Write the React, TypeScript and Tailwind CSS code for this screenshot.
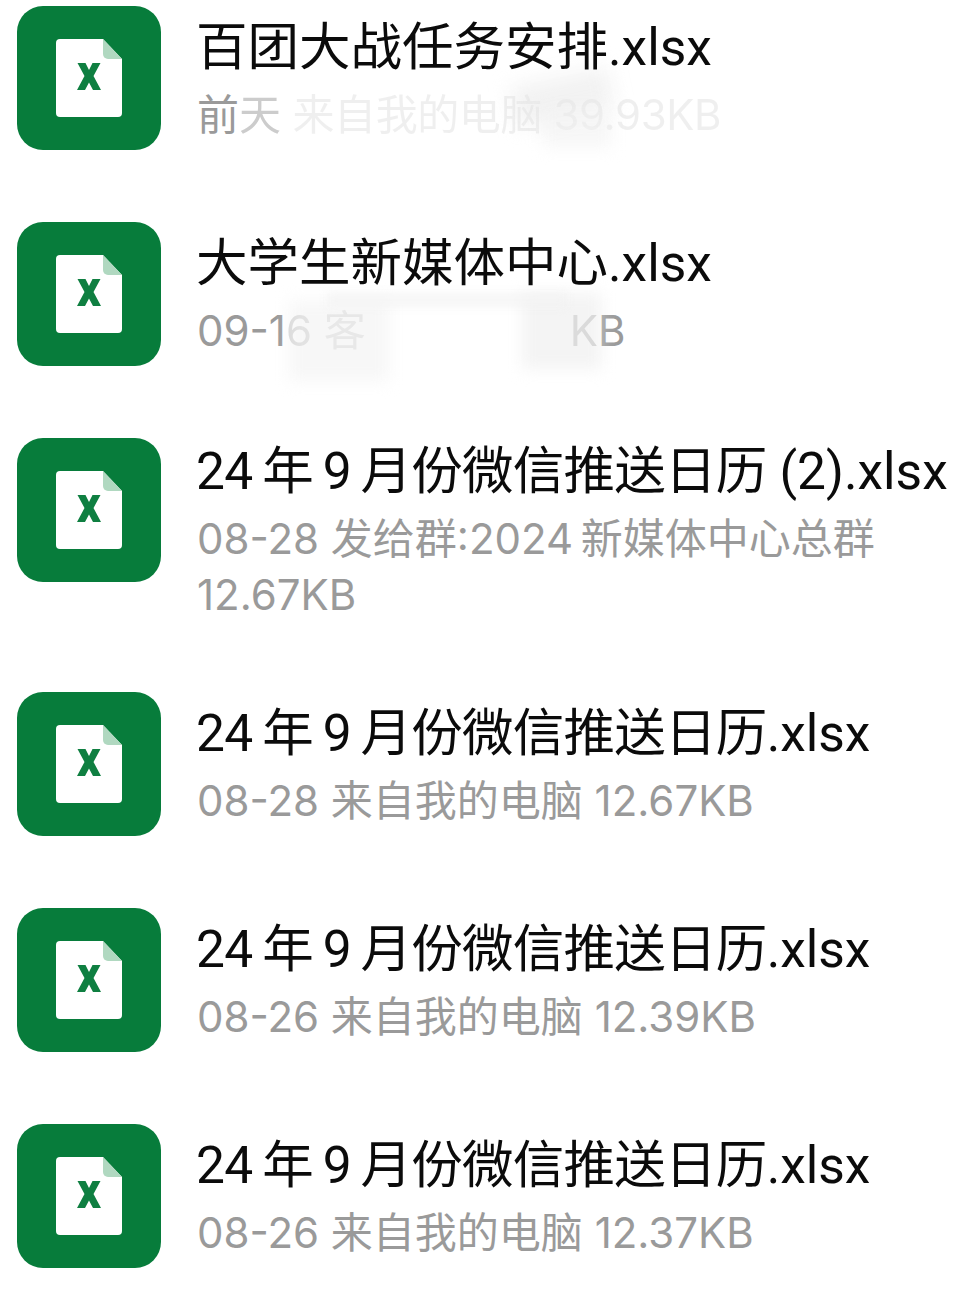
const NAME_24 = '24\u2009年\u20099\u2009月份微信推送日历';

const files = [
  { name: '百团大战任务安排', ext: '.xlsx', meta: [], kind: 'first' },
  { name: '大学生新媒体中心', ext: '.xlsx', meta: [], kind: 'second' },
  { name: NAME_24, ext: ' (2).xlsx', meta: ['08-28 发给群:2024\u2009新媒体中心总群', '12.67KB'], kind: 'tall' },
  { name: NAME_24, ext: '.xlsx', meta: ['08-28 来自我的电脑 12.67KB'], kind: 'plain' },
  { name: NAME_24, ext: '.xlsx', meta: ['08-26 来自我的电脑 12.39KB'], kind: 'plain' },
  { name: NAME_24, ext: '.xlsx', meta: ['08-26 来自我的电脑 12.37KB'], kind: 'plain' },
];

function ExcelIcon() {
  return (
    <div className="flex h-[144px] w-[144px] shrink-0 items-center justify-center rounded-[26px] bg-[#077c3b]">
      <svg width="66" height="78" viewBox="0 0 66 78">
        <path d="M4 0H47L66 20V74a4 4 0 0 1-4 4H4a4 4 0 0 1-4-4V4a4 4 0 0 1 4-4Z" fill="#ffffff" />
        <path d="M47 0L66 20H52a5 5 0 0 1-5-5Z" fill="#b0d8c0" />
        <path d="M21.5 24H29.5L33 31L36.5 24H44.5L37.5 37L45 51H37L33 43.5L29 51H21L28.5 37Z" fill="#0f7f41" />
      </svg>
    </div>
  );
}

// 第一行的涂抹:文字几乎被擦掉
function SmudgedFirst() {
  return (
    <div className="relative text-[42px] leading-[56px] text-[#9a9a9a]">
      前<span className="opacity-50">天</span>
      <span className="tracking-[-0.4px] opacity-15"> 来自我的电脑 39.93KB</span>
      <div className="absolute left-[315px] top-[-10px] h-[40px] w-[100px] -rotate-12 bg-[#e6e6e6]/50 blur-[10px]" />
      <div className="absolute left-[345px] top-[22px] h-[38px] w-[70px] bg-[#f0f0f0]/50 blur-[8px]" />
    </div>
  );
}

function SmudgedSecond() {
  return (
    <div className="relative text-[42px] leading-[56px] text-[#9a9a9a]">
      09-1<span className="opacity-40">6</span>
      <span className="opacity-30"> 客</span>
      <span className="inline-block w-[204px]" />
      <span className="opacity-50">K</span>B
      <div className="absolute left-[92px] top-[-2px] h-[80px] w-[100px] bg-[#f0f0f0]/50 blur-[8px]" />
      <div className="absolute left-[325px] top-[-10px] h-[76px] w-[80px] bg-[#eaeaea]/50 blur-[8px]" />
      <div className="absolute left-[130px] top-[-10px] h-[14px] w-[240px] bg-[#f2f2f2]/70 blur-[5px]" />
    </div>
  );
}

export default function App() {
  return (
    <div className="h-[1298px] w-[973px] overflow-hidden bg-white pl-[17px] pt-[6px] font-['Inter','Noto_Sans_CJK_SC',sans-serif]">
      {files.map((file, i) => {
        const tall = file.kind === 'tall';
        const tight = file.kind === 'tall' || file.kind === 'plain';
        return (
          <div key={i} className={`box-border flex min-h-[216px] gap-[36px] ${tall ? 'pb-[69px]' : 'pb-[61px]'}`}>
            <ExcelIcon />
            <div className={`min-w-0 flex-1 whitespace-nowrap ${tall ? 'pt-[4px]' : 'pt-[12px]'}`}>
              <div className="relative z-10 mb-[9px] -ml-px font-['Roboto','Noto_Sans_CJK_SC',sans-serif] text-[51.5px] leading-[60px] text-[#0b0b0b]">
                <span className={tight ? 'tracking-[-0.75px]' : ''}>{file.name}</span>
                {file.ext}
              </div>
              {file.kind === 'first' && <SmudgedFirst />}
              {file.kind === 'second' && <SmudgedSecond />}
              {file.meta.map((line, j) => (
                <div key={j} className="text-[42px] leading-[56px] text-[#9a9a9a]">{line}</div>
              ))}
            </div>
          </div>
        );
      })}
    </div>
  );
}
